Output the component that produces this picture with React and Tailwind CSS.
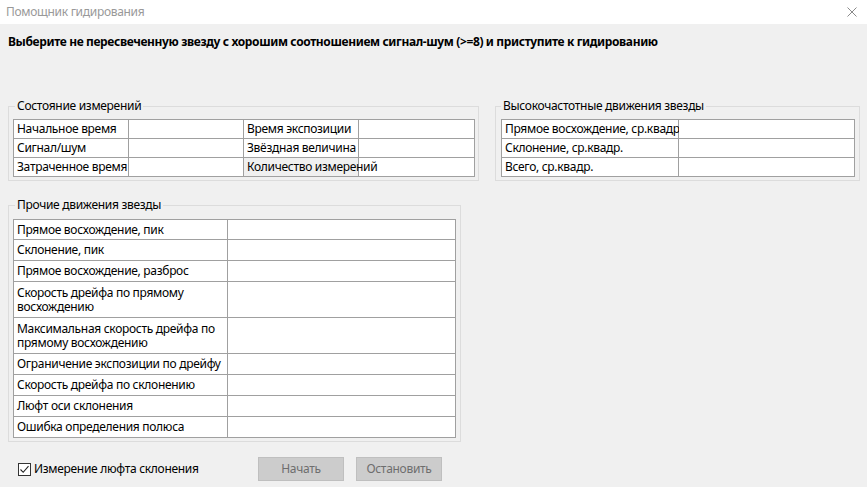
import React from "react";

const font = { fontFamily: '"Noto Sans", "Liberation Sans", sans-serif' };

function Cell({ children, className = "" }) {
  return (
    <div className={"border-r border-b border-[#a0a0a0] pl-[3px] flex items-center whitespace-nowrap text-[12px] leading-[14px] text-black bg-white " + className}>
      {children}
    </div>
  );
}

function Group({ title, className = "", legendClass = "", children }) {
  return (
    <fieldset className={"border border-[#dcdcdc] " + className}>
      <legend className={"px-[2px] text-[12px] leading-[16px] text-black " + legendClass}>{title}</legend>
      {children}
    </fieldset>
  );
}

export default function App() {
  const other = [
    ["Прямое восхождение, пик", "h-[20px]"],
    ["Склонение, пик", "h-[21px]"],
    ["Прямое восхождение, разброс", "h-[21px]"],
    ["Скорость дрейфа по прямому\nвосхождению", "h-[36px] whitespace-pre-line"],
    ["Максимальная скорость дрейфа по\nпрямому восхождению", "h-[36px] whitespace-pre-line"],
    ["Ограничение экспозиции по дрейфу", "h-[21px]"],
    ["Скорость дрейфа по склонению", "h-[21px]"],
    ["Люфт оси склонения", "h-[21px]"],
    ["Ошибка определения полюса", "h-[21px]"],
  ];
  return (
    <div className="w-[867px] h-[487px] bg-[#f0f0f0] flex flex-col overflow-hidden tracking-[-0.3px]" style={font}>
      <div className="h-[24px] bg-white flex items-center justify-between pl-[6px] pr-[10px] shrink-0">
        <span className="text-[12px] text-[#999999] leading-[16px]">Помощник гидирования</span>
        <svg width="10" height="10" viewBox="0 0 10 10">
          <path d="M0.5 0.5 L9.5 9.5 M9.5 0.5 L0.5 9.5" stroke="#8a8a8a" strokeWidth="1" fill="none" />
        </svg>
      </div>
      <div className="mt-[10px] pl-[8px] text-[12px] font-bold leading-[16px] text-black tracking-[-0.37px]">
        Выберите не пересвеченную звезду с хорошим соотношением сигнал-шум (&gt;=8) и приступите к гидированию
      </div>
      <div className="mt-[48px] flex items-start pl-[8px] gap-[16px]">
        <Group title="Состояние измерений" className="w-[471px] pb-[3px]" legendClass="ml-[6px]">
          <div className="mt-[5px] ml-[4px] w-[462px] grid grid-cols-[115px_115px_115px_116px] border-t border-l border-[#a0a0a0]">
            <Cell className="h-[19px]">Начальное время</Cell>
            <Cell className="h-[19px]"></Cell>
            <Cell className="h-[19px]">Время экспозиции</Cell>
            <Cell className="h-[19px]"></Cell>
            <Cell className="h-[19px]">Сигнал/шум</Cell>
            <Cell className="h-[19px]"></Cell>
            <Cell className="h-[19px]">Звёздная величина</Cell>
            <Cell className="h-[19px]"></Cell>
            <Cell className="h-[19px]">Затраченное время</Cell>
            <Cell className="h-[19px]"></Cell>
            <Cell className="h-[19px] relative z-10 !bg-transparent">Количество измерений</Cell>
            <Cell className="h-[19px]"></Cell>
          </div>
        </Group>
        <Group title="Высокочастотные движения звезды" className="w-[365px] pb-[3px]" legendClass="ml-[5px]">
          <div className="mt-[5px] ml-[5px] w-[354px] grid grid-cols-[177px_176px] border-t border-l border-[#a0a0a0]">
            <Cell className="h-[19px]">Прямое восхождение, ср.квадр</Cell>
            <Cell className="h-[19px]"></Cell>
            <Cell className="h-[19px]">Склонение, ср.квадр.</Cell>
            <Cell className="h-[19px]"></Cell>
            <Cell className="h-[19px]">Всего, ср.квадр.</Cell>
            <Cell className="h-[19px]"></Cell>
          </div>
        </Group>
      </div>
      <div className="mt-[16px] pl-[8px] flex">
        <Group title="Прочие движения звезды" className="w-[453px] pb-[3px]" legendClass="ml-[6px]">
          <div className="mt-[6px] ml-[4px] w-[443px] grid grid-cols-[214px_228px] border-t border-l border-[#a0a0a0]">
            {other.map(([t, h]) => (
              <React.Fragment key={t}>
                <Cell className={h}>{t}</Cell>
                <Cell className={h.split(" ")[0]}></Cell>
              </React.Fragment>
            ))}
          </div>
        </Group>
      </div>
      <div className="mt-[15px] flex items-center h-[24px]">
        <div className="w-[258px] flex items-center pl-[18px]">
          <div className="w-[13px] h-[13px] border border-[#333333] bg-white flex items-center justify-center">
            <svg width="11" height="11" viewBox="0 0 11 11">
              <path d="M1.5 5.5 L4.2 8.3 L9.5 2.2" stroke="#222222" strokeWidth="1.1" fill="none" />
            </svg>
          </div>
          <span className="ml-[3px] text-[12px] leading-[16px] text-black">Измерение люфта склонения</span>
        </div>
        <div className="flex gap-[12px]">
          <div className="w-[86px] h-[24px] bg-[#cccccc] border border-[#bfbfbf] flex items-center justify-center text-[12px] text-[#6e6e6e]">Начать</div>
          <div className="w-[86px] h-[24px] bg-[#cccccc] border border-[#bfbfbf] flex items-center justify-center text-[12px] text-[#6e6e6e]">Остановить</div>
        </div>
      </div>
    </div>
  );
}
